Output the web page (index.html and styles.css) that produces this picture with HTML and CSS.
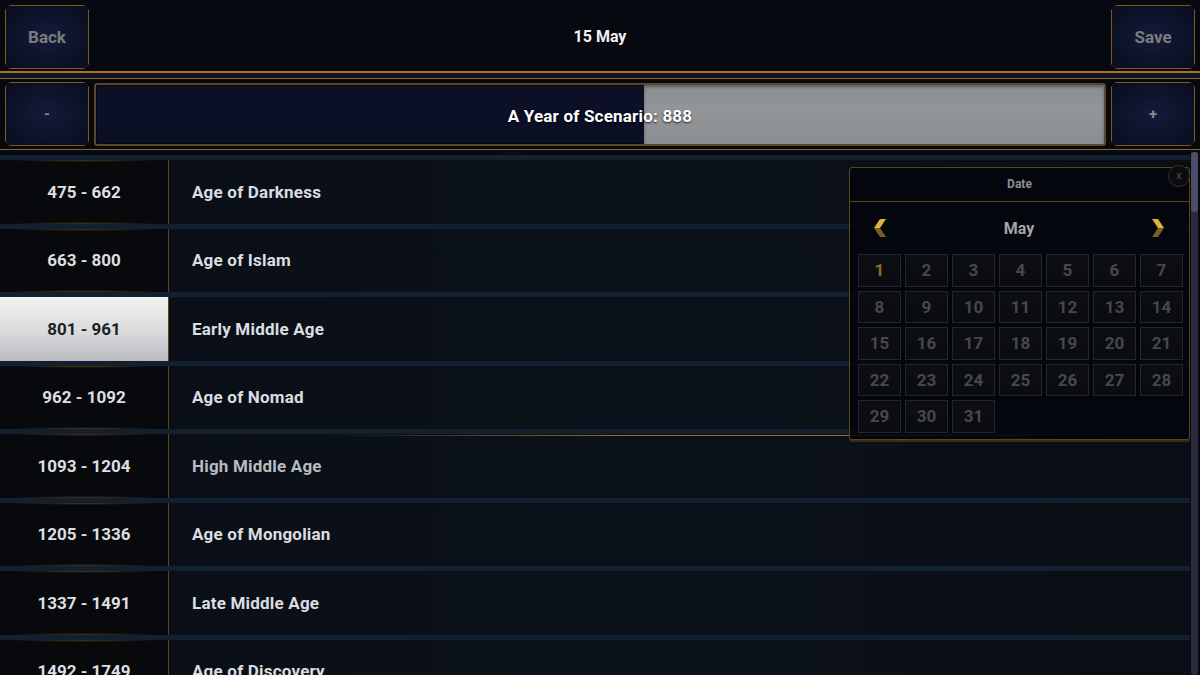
FILE: index.html
```html
<!doctype html>
<html lang="en">
<head>
  <title>Scenario Year</title>
  <meta charset="utf-8" />
  <meta name="viewport" content="width=device-width,initial-scale=1" />
  <link rel="stylesheet" href="styles.css">
</head>
<body>
  <main class="screen">
    <header class="topbar">
      <button class="btn">Back</button>
      <h1>15 May</h1>
      <button class="btn">Save</button>
    </header>

    <div class="gap-band"></div>

    <div class="yearbar">
      <button class="btn btn-small">-</button>
      <div class="progress">
        <div class="progress-fill" style="width:45.6%"></div>
        <span class="progress-label">A Year of Scenario: 888</span>
      </div>
      <button class="btn btn-small">+</button>
    </div>

    <ul class="ages">
      <li class="age"><span class="years">475 - 662</span><span class="name">Age of Darkness</span></li>
      <li class="age"><span class="years">663 - 800</span><span class="name">Age of Islam</span></li>
      <li class="age"><span class="years selected">801 - 961</span><span class="name">Early Middle Age</span></li>
      <li class="age"><span class="years">962 - 1092</span><span class="name">Age of Nomad</span></li>
      <li class="age hover"><span class="years">1093 - 1204</span><span class="name">High Middle Age</span></li>
      <li class="age"><span class="years">1205 - 1336</span><span class="name">Age of Mongolian</span></li>
      <li class="age"><span class="years">1337 - 1491</span><span class="name">Late Middle Age</span></li>
      <li class="age"><span class="years">1492 - 1749</span><span class="name">Age of Discovery</span></li>
    </ul>

    <div class="scrollbar"><div class="thumb"></div></div>

    <section class="calendar">
      <div class="cal-head">Date</div>
      <button class="cal-close">x</button>
      <div class="cal-month">
        <svg class="chev" width="16" height="20" viewBox="0 0 16 20">
          <polygon points="8,1 14,1 8,10 2,10" fill="#e2b13e" />
          <polygon points="2,10 8,10 14,19 8,19" fill="#7d5d22" />
        </svg>
        <span>May</span>
        <svg class="chev" width="16" height="20" viewBox="0 0 16 20">
          <polygon points="8,1 2,1 8,10 14,10" fill="#e2b13e" />
          <polygon points="14,10 8,10 2,19 8,19" fill="#7d5d22" />
        </svg>
      </div>
      <div class="days">
        <span class="day today">1</span><span class="day">2</span><span class="day">3</span><span class="day">4</span><span class="day">5</span><span class="day">6</span><span class="day">7</span>
        <span class="day">8</span><span class="day">9</span><span class="day">10</span><span class="day">11</span><span class="day">12</span><span class="day">13</span><span class="day">14</span>
        <span class="day">15</span><span class="day">16</span><span class="day">17</span><span class="day">18</span><span class="day">19</span><span class="day">20</span><span class="day">21</span>
        <span class="day">22</span><span class="day">23</span><span class="day">24</span><span class="day">25</span><span class="day">26</span><span class="day">27</span><span class="day">28</span>
        <span class="day">29</span><span class="day">30</span><span class="day">31</span>
      </div>
    </section>
  </main>
</body>
</html>
```

FILE: styles.css
```css
* {
  box-sizing: border-box;
}

html,
body {
  margin: 0;
  padding: 0;
  height: 100%;
  background: #06090f;
  font-family: Roboto, "Liberation Sans", sans-serif;
  overflow: hidden;
}

.screen {
  position: relative;
  width: 1200px;
  height: 675px;
  overflow: hidden;
  background:
    linear-gradient(100deg, transparent 40%, rgba(40, 60, 90, 0.06) 41%, transparent 42%),
    #070a10;
}

/* buttons */

.btn {
  width: 84px;
  height: 64px;
  border: 1.5px solid transparent;
  background:
    radial-gradient(ellipse at center, #141a3a 0%, #0d1126 70%, #090c1a 100%) padding-box,
    #7a5a22 border-box;
  clip-path: polygon(5px 0, calc(100% - 5px) 0, 100% 5px, 100% calc(100% - 5px), calc(100% - 5px) 100%, 5px 100%, 0 calc(100% - 5px), 0 5px);
  color: #7b7c80;
  font-family: inherit;
  font-size: 17px;
  font-weight: 700;
  padding: 0;
}

.btn-small {
  font-size: 15px;
  color: #8a8b90;
}

/* top bar */

.topbar {
  height: 73px;
  padding: 5px 5px 0;
  display: flex;
  align-items: flex-start;
  justify-content: space-between;
  border-bottom: 2px solid #b06c22;
  background: #06090f;
}

.topbar h1 {
  margin: 0;
  line-height: 64px;
  font-size: 16px;
  font-weight: 700;
  color: #f2f2f2;
}

.gap-band {
  height: 5px;
  background: #0d1520;
}

.yearbar {
  display: flex;
  gap: 5px;
  padding: 3px 5px;
  border-top: 1px solid #8a6424;
  border-bottom: 1px solid #8a6424;
  background: #060910;
  height: 72px;
}

.progress {
  flex: 1;
  display: grid;
  justify-items: end;
  align-items: stretch;
  margin-top: 1px;
  border: 2px solid #5e4720;
  border-radius: 3px;
  background: linear-gradient(#0c1128, #0a0f24);
  box-shadow: inset 0 0 0 1px #05070d;
}

.progress-fill,
.progress-label {
  grid-area: 1 / 1;
}

.progress-fill {
  background: linear-gradient(#8a8d90, #939699 40%, #8b8e91);
  box-shadow: inset 0 2px 3px rgba(0, 0, 0, 0.35);
}

.progress-label {
  justify-self: center;
  align-self: center;
  margin-top: 2px;
  color: #ffffff;
  font-size: 17px;
  font-weight: 700;
  letter-spacing: 0.2px;
  text-shadow: 0 1px 2px rgba(0, 0, 0, 0.8);
}

/* list of ages */

.ages {
  list-style: none;
  margin: 0;
  padding: 5px 10px 0 0;
}

.age {
  position: relative;
  display: flex;
  height: 68.5px;
  border-top: 5px solid #132030;
  background: linear-gradient(90deg, #0a0f16, #0b111a 60%, #0a0e15);
}

.years {
  width: 169px;
  display: flex;
  align-items: center;
  justify-content: center;
  border-right: 1px solid #5b4420;
  background:
    radial-gradient(ellipse 45% 2px at 50% 0, rgba(170, 120, 40, 0.45), transparent),
    radial-gradient(ellipse 45% 2px at 50% 100%, rgba(170, 120, 40, 0.45), transparent),
    #07090d;
  color: #dedfe0;
  font-size: 17px;
  font-weight: 700;
}

.years.selected {
  background: linear-gradient(#f2f2f3, #d9dadc 55%, #b9babd);
  color: #1e1f22;
}

.name {
  display: flex;
  align-items: center;
  padding-left: 23px;
  color: #dcdde0;
  font-size: 17px;
  font-weight: 700;
  letter-spacing: 0.2px;
}

.age.hover .name {
  color: #b9bbbe;
}

.age.hover::before,
.age.hover::after {
  content: "";
  position: absolute;
  left: 169px;
  right: 0;
  height: 1px;
}

.age.hover::before {
  top: 1px;
  background: linear-gradient(90deg, transparent 15%, #9a7028 45%, #9a7028 70%, transparent);
}

.age.hover::after {
  bottom: -1px;
  background: linear-gradient(90deg, transparent, #9a7028 35%, #9a7028 80%, transparent 94%);
}

.scrollbar {
  position: absolute;
  right: 2px;
  top: 152px;
  bottom: 0;
  width: 7px;
  border-radius: 3px;
  background: #2a2c3e;
}

.thumb {
  height: 60px;
  border-radius: 3px;
  background: #4c4d66;
}

/* date picker popup */

.calendar {
  position: absolute;
  left: 849px;
  top: 167px;
  width: 341px;
  height: 273px;
  border: 1px solid #5a4519;
  border-radius: 3px;
  background: rgba(3, 5, 12, 0.86);
  box-shadow: 0 2px 0 #3a2c12;
}

.cal-head {
  height: 34px;
  line-height: 33px;
  text-align: center;
  border-bottom: 1px solid #5e461c;
  color: #8d8e92;
  font-size: 12px;
  font-weight: 700;
}

.cal-close {
  position: absolute;
  right: -1px;
  top: -3px;
  width: 22px;
  height: 22px;
  padding: 0;
  border: 1px solid #3b2f18;
  border-radius: 50%;
  background: #0a0c12;
  color: #5c4b28;
  font-family: inherit;
  font-size: 11px;
  line-height: 18px;
}

.cal-month {
  height: 52px;
  display: flex;
  align-items: center;
  justify-content: space-between;
  padding: 0 23px 0 22px;
}

.cal-month span {
  color: #a4a5a8;
  font-size: 16px;
  font-weight: 700;
  text-shadow: 0 1px 1px #000;
}

.days {
  display: grid;
  grid-template-columns: repeat(7, 43px);
  grid-auto-rows: 32.5px;
  gap: 4px 4px;
  padding-left: 8px;
}

.day {
  display: flex;
  align-items: center;
  justify-content: center;
  border: 1px solid #24262b;
  background: linear-gradient(#0c0e13, #0a0c10);
  color: #46484c;
  font-size: 17px;
  font-weight: 700;
}

.day.today {
  color: #8c6b2a;
}
```
